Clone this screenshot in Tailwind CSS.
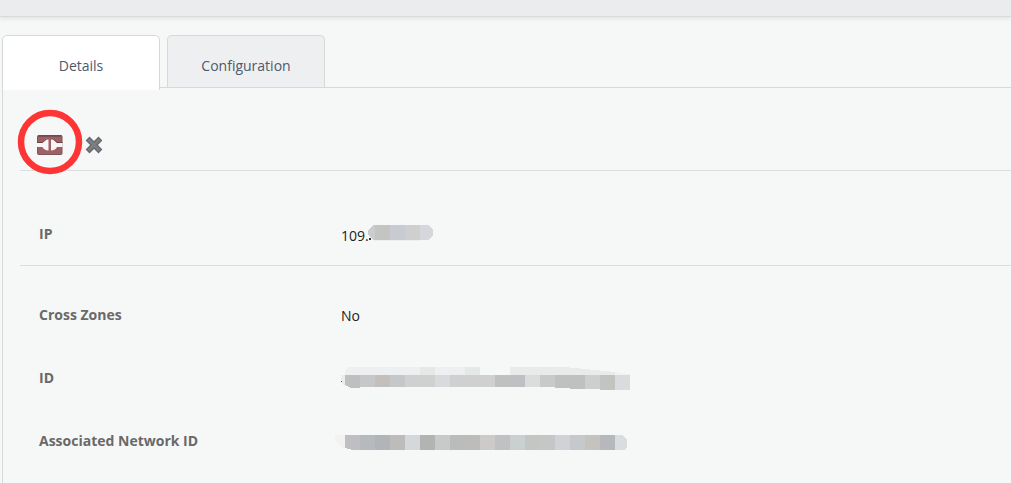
<!DOCTYPE html>
<html lang="en">
<head>
  <meta charset="UTF-8">
  <meta name="viewport" content="width=device-width, initial-scale=1.0">
  <title>IP Address Details</title>
  <script src="https://cdn.jsdelivr.net/npm/@tailwindcss/browser@4"></script>
</head>
<body class="min-h-screen flex flex-col bg-[#f6f8f7] font-['Open_Sans','Noto_Sans',sans-serif] text-sm overflow-hidden">
  <header class="h-[17px] bg-[#ebecee] border-b border-[#d9dadc] shadow-[0_2px_4px_#e2e4e4]"></header>

  <main class="flex-1 flex flex-col pt-[18px] pl-0.5">
    <!-- Tabs -->
    <nav class="flex items-start h-[53px] border-b border-[#d7d9d9] text-[#4c5a6c]">
      <button class="w-[158px] h-[55px] pt-1.5 bg-white border border-b-0 border-[#d7d9d9] rounded-t-[5px]">Details</button>
      <button class="w-[158px] h-[52px] pt-[9px] ml-[7px] bg-[#eeeff1] border border-b-0 border-[#d7d9d9] rounded-t-[5px]">Configuration</button>
    </nav>

    <section class="flex-1 border-l border-[#d7d9d9] pl-[17px]">
      <!-- Actions -->
      <div class="relative flex items-center gap-[22px] h-[83px] pt-8 pl-[17px] border-b border-[#dcdede]">
        <button aria-label="Enable static NAT">
          <svg width="26" height="20" viewBox="0 0 26 20">
            <rect x="0.5" y="0.5" width="24.5" height="19" rx="1" fill="#9f5f64" stroke="#805559"/>
            <path d="M1 1h23.5" stroke="#5f4145"/>
            <path d="M0 8h5.500C6.500 6 8.500 4.500 11.500 4.500v11c-3 0-5-1.500-6-3.500H0zM25.500 8H20C19 6 17 4.500 14 4.500v11c3 0 5-1.500 6-3.500h5.500z" fill="#f7f5f5"/>
            <path d="M0 7.500h5.500L9 4.500M25.500 7.500H20l-3.500-3" fill="none" stroke="#6b454a"/>
          </svg>
        </button>
        <button aria-label="Release IP">
          <svg width="18" height="18" viewBox="0 0 18 18" stroke-linecap="square">
            <path d="M4.500 4.500l9 9M13.500 4.500l-9 9" stroke="#65686c" stroke-width="5.500"/>
            <path d="M4.500 4.500l9 9M13.500 4.500l-9 9" stroke="#7b7e83" stroke-width="3"/>
          </svg>
        </button>
        <svg class="absolute -left-[3px] top-[21px]" width="66" height="66" viewBox="0 0 66 66" fill="none">
          <circle cx="33" cy="33" r="29" stroke="#fd3535" stroke-width="6.5"/>
        </svg>
      </div>

      <dl class="grid grid-cols-[302px_1fr] items-center h-[95px] pt-8 pl-[19px] border-b border-[#dcdede]">
        <dt class="font-bold text-[#696969]">IP</dt>
        <dd class="flex items-center pt-[3px] text-[#222]">109.<svg class="-ml-px -mt-1.5" width="66" height="18" viewBox="0 0 66 18" shape-rendering="crispEdges">
            <path d="M5 1h10v15H5l-5-5V6z" fill="#cbccce"/>
            <path d="M7 1h15v15H7z" fill="#c4c5c2"/>
            <path d="M22 1h15v15H22z" fill="#c8cbd1"/>
            <path d="M37 1h15v15H37z" fill="#cfcfd0"/>
            <path d="M52 1h9l4 5v5l-4 5h-9z" fill="#d6d7dc"/>
            <path d="M5 16h47v1H7z" fill="#eeefef"/>
            <path d="M1 14h2v2H1z" fill="#333"/>
          </svg></dd>
      </dl>

      <dl class="grid grid-cols-[302px_1fr] auto-rows-[63px] items-center pt-[18px] pl-[19px]">
        <dt class="pb-0.5 font-bold text-[#696969]">Cross Zones</dt>
        <dd class="text-[#222]">No</dd>
        <dt class="pb-0.5 font-bold text-[#696969]">ID</dt>
        <dd>
          <svg width="290" height="24" viewBox="0 0 290 24" shape-rendering="crispEdges">
            <path d="M0 8h4v12l-4-4z" fill="#ebecec"/>
            <path d="M0 14h1v1H0z" fill="#7d5d60"/>
            <path d="M7 0h132v8H4V3z" fill="#eeeff0"/>
            <path d="M79 0h15v8H79zM124 0h15v8h-15z" fill="#e6e7e7"/>
            <path d="M169 0h55l50 5v3H169z" fill="#e9ebeb"/>
            <path d="M4 8h15v13h-9l-6-3z" fill="#bfbfbf"/>
            <path d="M19 8h15v12H19z" fill="#c5c7c9"/>
            <path d="M34 8h15v12H34z" fill="#c2bfbc"/>
            <path d="M49 8h15v12H49z" fill="#c5c7c9"/>
            <path d="M64 8h30v12H64z" fill="#cfd1d0"/>
            <path d="M94 8h15v12H94z" fill="#d8dadd"/>
            <path d="M109 8h45v12h-45z" fill="#cfd0cf"/>
            <path d="M154 8h15v12h-15z" fill="#bfc1c0"/>
            <path d="M169 8h15v12h-15z" fill="#bfc0c4"/>
            <path d="M184 8h15v12h-15z" fill="#dbdddb"/>
            <path d="M199 8h15v12h-15z" fill="#c8cac9"/>
            <path d="M214 8h15v13h-15zM229 8h15v14h-15z" fill="#bfc1c0"/>
            <path d="M244 8h15v14h-15z" fill="#cecece"/>
            <path d="M259 8h15v15h-15z" fill="#c2c4c2"/>
            <path d="M274 8h15v15h-15z" fill="#dadbdf"/>
            <path d="M274 5l15 2v1h-15z" fill="#f1f3f2"/>
          </svg>
        </dd>
        <dt class="pb-0.5 font-bold text-[#696969]">Associated Network ID</dt>
        <dd class="pt-0.5">
          <svg class="-ml-1.5" width="294" height="15" viewBox="0 0 294 15" shape-rendering="crispEdges">
            <path d="M0 0h10v13H7l-7-7z" fill="#f2f2f0"/>
            <path d="M10 0h15v15h-7l-8-2z" fill="#bfbec3"/>
            <path d="M25 0h15v15H25z" fill="#b6babd"/>
            <path d="M40 0h15v15H40z" fill="#b2b4b9"/>
            <path d="M55 0h15v15H55z" fill="#bebcbb"/>
            <path d="M70 0h15v15H70z" fill="#d4d8db"/>
            <path d="M85 0h15v15H85z" fill="#b1b4b3"/>
            <path d="M100 0h15v15h-15z" fill="#c8cac9"/>
            <path d="M115 0h15v15h-15z" fill="#babcbb"/>
            <path d="M130 0h15v15h-15z" fill="#bdbcba"/>
            <path d="M145 0h15v15h-15z" fill="#cccbc9"/>
            <path d="M160 0h15v15h-15z" fill="#bfc1c3"/>
            <path d="M175 0h15v15h-15z" fill="#cacfd0"/>
            <path d="M190 0h15v15h-15z" fill="#c5c6c3"/>
            <path d="M205 0h15v15h-15z" fill="#c4c7c6"/>
            <path d="M220 0h15v15h-15z" fill="#d0d2d7"/>
            <path d="M235 0h15v15h-15z" fill="#c6c9cb"/>
            <path d="M250 0h15v15h-15z" fill="#c6c3be"/>
            <path d="M265 0h15v15h-15z" fill="#b7b8bb"/>
            <path d="M280 0h7l5 5v7l-2 3h-10z" fill="#dadde0"/>
          </svg>
        </dd>
      </dl>
    </section>
  </main>
</body>
</html>
